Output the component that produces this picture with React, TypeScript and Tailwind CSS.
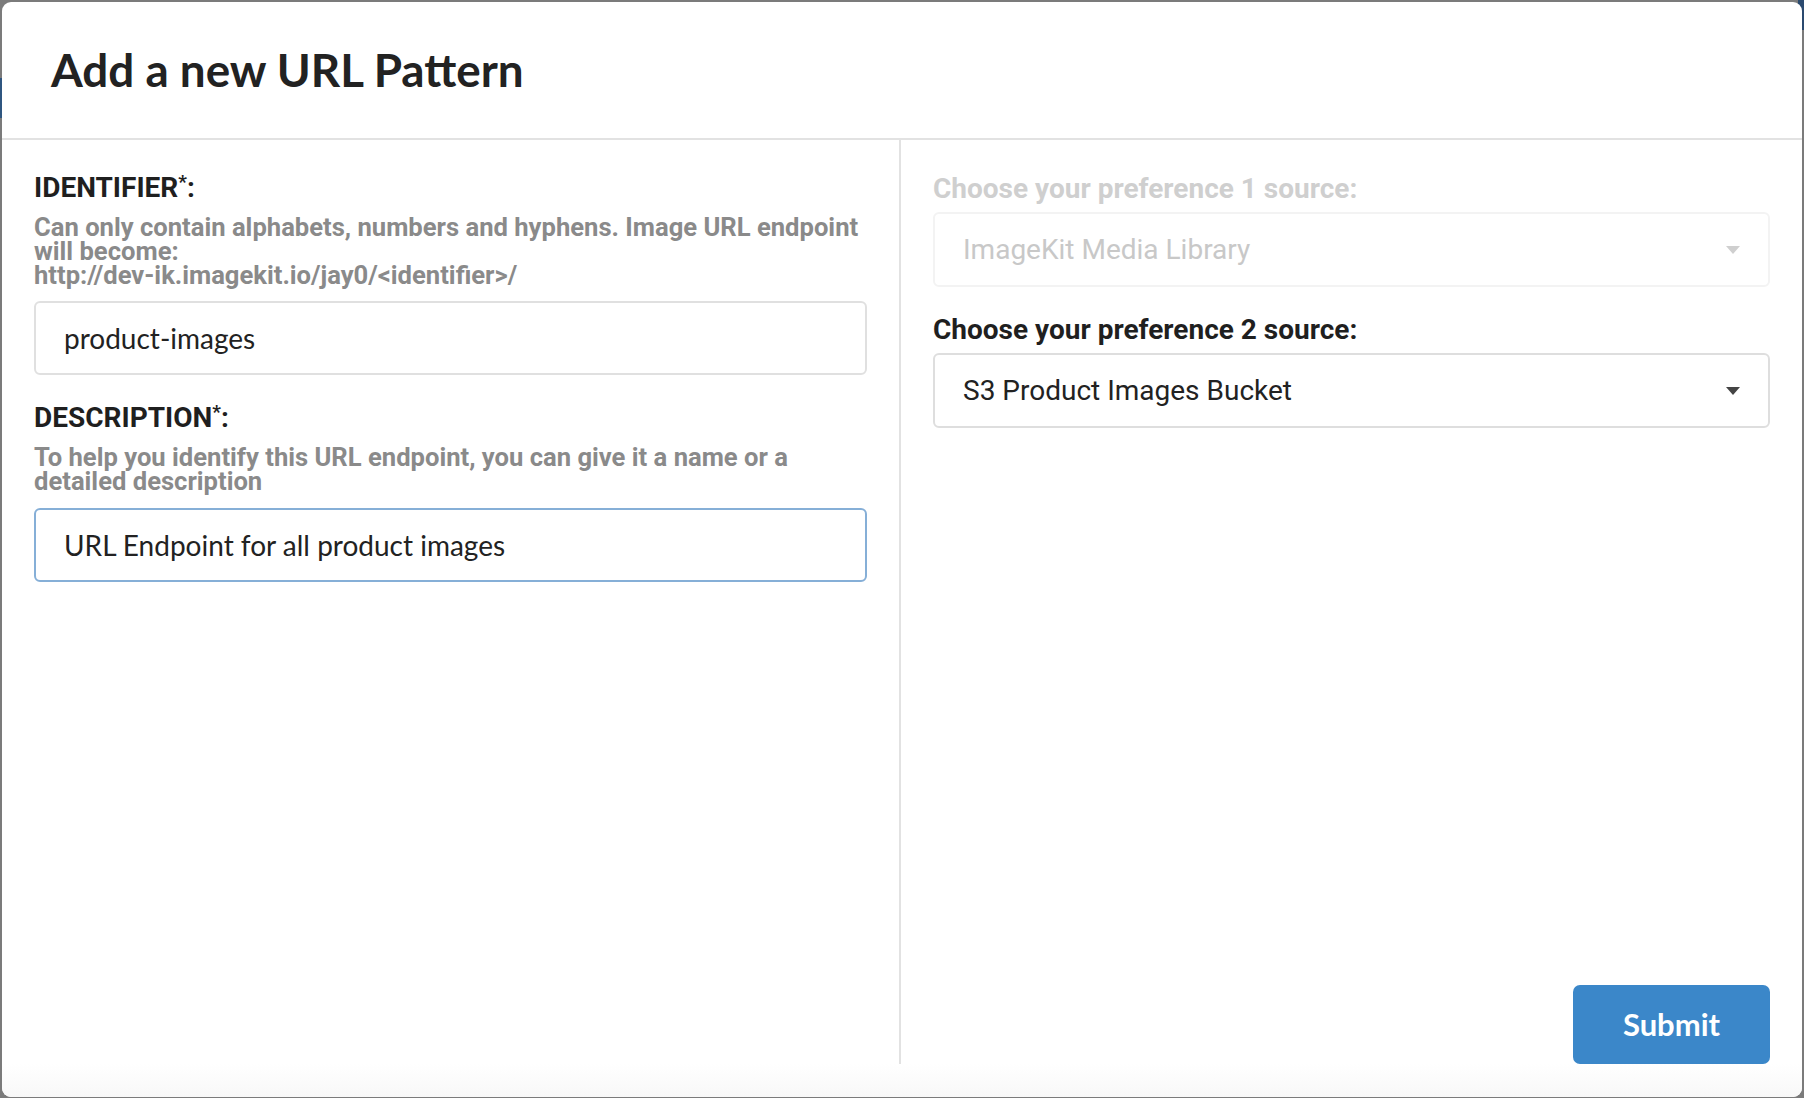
import { ReactNode } from 'react'

const roboto = { fontFamily: 'Roboto, "Liberation Sans", sans-serif' }
const lato = { fontFamily: 'Lato, "Liberation Sans", sans-serif' }

function Label({ children, muted }: { children: ReactNode; muted?: boolean }) {
  return (
    <div
      style={roboto}
      className={`text-[28px] font-bold leading-[24px] ${muted ? 'text-[#cfcfcf]' : 'text-[#1f1f1f]'}`}
    >
      {children}
    </div>
  )
}

function Required({ text }: { text: string }) {
  return (
    <Label>
      {text}
      <span className="relative -top-[9px] text-[19px] leading-[0px]">*</span>:
    </Label>
  )
}

function Help({ children }: { children: ReactNode }) {
  return (
    <p style={roboto} className="mt-[15px] text-[25.6px] font-bold leading-[24px] text-[#8a8a8a]">
      {children}
    </p>
  )
}

function Caret({ light }: { light?: boolean }) {
  return (
    <svg width="14" height="8" viewBox="0 0 14 8" className="shrink-0">
      <path d="M0 0h14L7 8z" fill={light ? '#cfcfcf' : '#444'} />
    </svg>
  )
}

function Select({ value, disabled }: { value: string; disabled?: boolean }) {
  return (
    <div
      style={roboto}
      className={`mt-[11px] flex h-[75px] items-center justify-between rounded-[6px] border-2 pl-[28px] pr-[28px] text-[28px] ${
        disabled ? 'border-[#f3f3f3] text-[#c8c8c8]' : 'border-[#dedede] text-[#222]'
      }`}
    >
      <span>{value}</span>
      <Caret light={disabled} />
    </div>
  )
}

export default function App() {
  return (
    <div className="relative h-[1098px] w-[1804px] overflow-hidden bg-[#7b7b7b] pl-[2px] pt-[2px]">
      {/* bits of the page behind the overlay */}
      <div className="absolute left-0 top-[78px] h-[40px] w-[2px] bg-[#2f5680]" />
      <div className="absolute right-0 top-0 h-[30px] w-[6px] bg-[#2b4a6f]" />

      <div className="relative flex h-[1095px] w-[1800px] flex-col overflow-hidden rounded-[9px] bg-white">
        <header className="flex h-[138px] shrink-0 items-center border-b-2 border-[#e2e2e2] px-[49px]">
          <h1 style={lato} className="text-[45.8px] font-bold leading-none text-[#222]">
            Add a new URL Pattern
          </h1>
        </header>

        <div className="flex h-[924px] shrink-0">
          <section className="w-[899px] shrink-0 border-r-2 border-[#e2e2e2] px-[32px] pt-[36px]">
            <Required text="IDENTIFIER" />
            <Help>
              Can only contain alphabets, numbers and hyphens. Image URL endpoint will become:
              <br />
              http://dev-ik.imagekit.io/jay0/&lt;identifier&gt;/
            </Help>
            <div
              style={lato}
              className="mt-[14px] flex h-[74px] items-center rounded-[6px] border-2 border-[#e0e0e0] px-[28px] text-[28px] text-[#222]"
            >
              product-images
            </div>

            <div className="mt-[31px]">
              <Required text="DESCRIPTION" />
            </div>
            <Help>To help you identify this URL endpoint, you can give it a name or a detailed description</Help>
            <div
              style={lato}
              className="mt-[15px] flex h-[74px] items-center rounded-[6px] border-2 border-[#86afd7] px-[28px] text-[28px] text-[#222]"
            >
              URL Endpoint for all product images
            </div>
          </section>

          <section className="flex flex-1 flex-col px-[32px] pt-[37px]">
            <Label muted>Choose your preference 1 source:</Label>
            <Select value="ImageKit Media Library" disabled />
            <div className="mt-[31px]">
              <Label>Choose your preference 2 source:</Label>
            </div>
            <Select value="S3 Product Images Bucket" />

            <button
              style={lato}
              className="mt-auto h-[79px] w-[197px] self-end rounded-[7px] bg-[#3b87c9] text-[31px] font-bold text-white"
            >
              Submit
            </button>
          </section>
        </div>

        <div className="flex-1 bg-gradient-to-b from-white to-[#f8f8f8]" />
      </div>
    </div>
  )
}
